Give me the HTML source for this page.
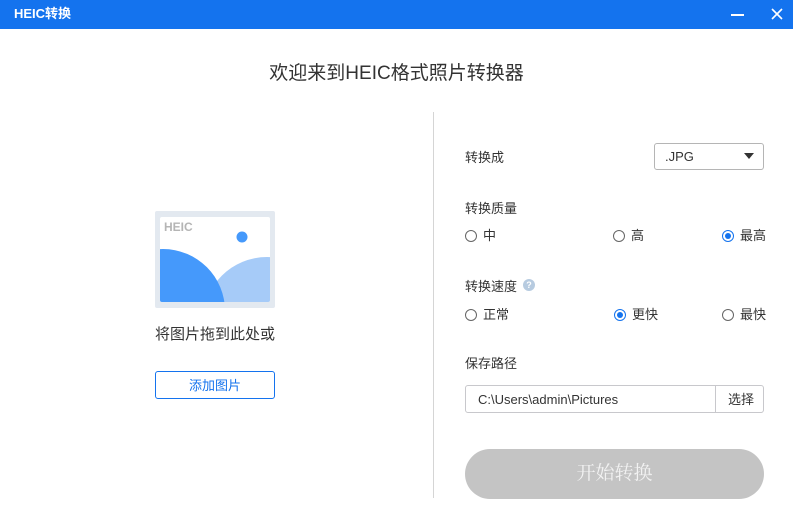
<!DOCTYPE html>
<html><head><meta charset="utf-8"><style>
*{margin:0;padding:0;box-sizing:border-box}
body{width:793px;height:525px;background:#fff;font-family:"Liberation Sans","Microsoft YaHei","Noto Sans CJK SC",sans-serif;position:relative;overflow:hidden;color:#333}
.a{position:absolute;white-space:nowrap;line-height:1.15}
.bar{position:absolute;left:0;top:0;width:793px;height:29px;background:#1473ee}
.r{position:absolute;width:12px;height:12px;border:1px solid #666;border-radius:50%}
.r.on{border-color:#1473ee}
.r.on:after{content:"";position:absolute;left:2px;top:2px;width:6px;height:6px;border-radius:50%;background:#1473ee}
.t{font-size:13px;color:#333}
</style></head><body>
<div class="bar"></div>
<div class="a" style="left:14px;top:7px;color:#fff;font-size:13px;font-weight:bold">HEIC转换</div>
<div class="a" style="left:731px;top:14px;width:13px;height:2px;background:#fff"></div>
<svg class="a" style="left:771px;top:8px" width="12" height="12"><path d="M1 1L11 11M11 1L1 11" stroke="#fff" stroke-width="1.6"/></svg>
<div class="a" style="left:0;width:793px;text-align:center;top:63px;font-size:19px;color:#333">欢迎来到HEIC格式照片转换器</div>
<div class="a" style="left:433px;top:112px;width:1px;height:386px;background:#d5d5d5"></div>
<svg class="a" style="left:155px;top:211px" width="120" height="97">
<rect x="0" y="0" width="120" height="97" rx="2" fill="#e3e9f0"/>
<defs><clipPath id="c"><rect x="5" y="6" width="110" height="85" rx="2"/></clipPath></defs>
<rect x="5" y="6" width="110" height="85" rx="2" fill="#fff"/>
<g clip-path="url(#c)">
<circle cx="112" cy="110" r="64" fill="#a6cbf8"/>
<circle cx="8" cy="100" r="62" fill="#4599fb"/>
</g>
<circle cx="87" cy="26" r="5.5" fill="#4599fb"/>
<text x="9" y="20" font-family="Liberation Sans" font-weight="bold" font-size="12" fill="#b5b5b5">HEIC</text>
</svg>
<div class="a" style="left:155px;width:120px;text-align:center;top:326px;font-size:15px;color:#333">将图片拖到此处或</div>
<div class="a" style="left:155px;top:371px;width:120px;height:28px;border:1px solid #1473ee;border-radius:3px;color:#1473ee;font-size:13px;text-align:center;line-height:27px">添加图片</div>

<div class="a t" style="left:465px;top:151px">转换成</div>
<div class="a" style="left:654px;top:143px;width:110px;height:27px;border:1px solid #b5b5b5;border-radius:3px;font-size:13px;line-height:25px;padding-left:10px">.JPG</div>
<svg class="a" style="left:744px;top:153px" width="10" height="6"><path d="M0 0H10L5 6Z" fill="#333"/></svg>

<div class="a t" style="left:465px;top:202px">转换质量</div>
<div class="r" style="left:465px;top:230px"></div><div class="a t" style="left:483px;top:229px">中</div>
<div class="r" style="left:613px;top:230px"></div><div class="a t" style="left:631px;top:229px">高</div>
<div class="r on" style="left:722px;top:230px"></div><div class="a t" style="left:740px;top:229px">最高</div>

<div class="a t" style="left:465px;top:280px">转换速度</div>
<div class="a" style="left:523px;top:279px;width:12px;height:12px;border-radius:50%;background:#b7cbe0;color:#fff;font-size:9px;font-weight:bold;text-align:center;line-height:12px">?</div>
<div class="r" style="left:465px;top:309px"></div><div class="a t" style="left:483px;top:308px">正常</div>
<div class="r on" style="left:614px;top:309px"></div><div class="a t" style="left:632px;top:308px">更快</div>
<div class="r" style="left:722px;top:309px"></div><div class="a t" style="left:740px;top:308px">最快</div>

<div class="a t" style="left:465px;top:357px">保存路径</div>
<div class="a" style="left:465px;top:385px;width:299px;height:28px;border:1px solid #c8c8cc;border-radius:3px"></div>
<div class="a" style="left:715px;top:385px;width:1px;height:28px;background:#c8c8cc"></div>
<div class="a" style="left:478px;top:393px;font-size:13px">C:\Users\admin\Pictures</div>
<div class="a t" style="left:728px;top:393px">选择</div>
<div class="a" style="left:465px;top:449px;width:299px;height:50px;border-radius:25px;background:#c4c4c4;color:#f2f2f2;font-size:19px;text-align:center;line-height:50px;font-family:'Liberation Serif','Noto Serif CJK SC',serif">开始转换</div>
</body></html>
